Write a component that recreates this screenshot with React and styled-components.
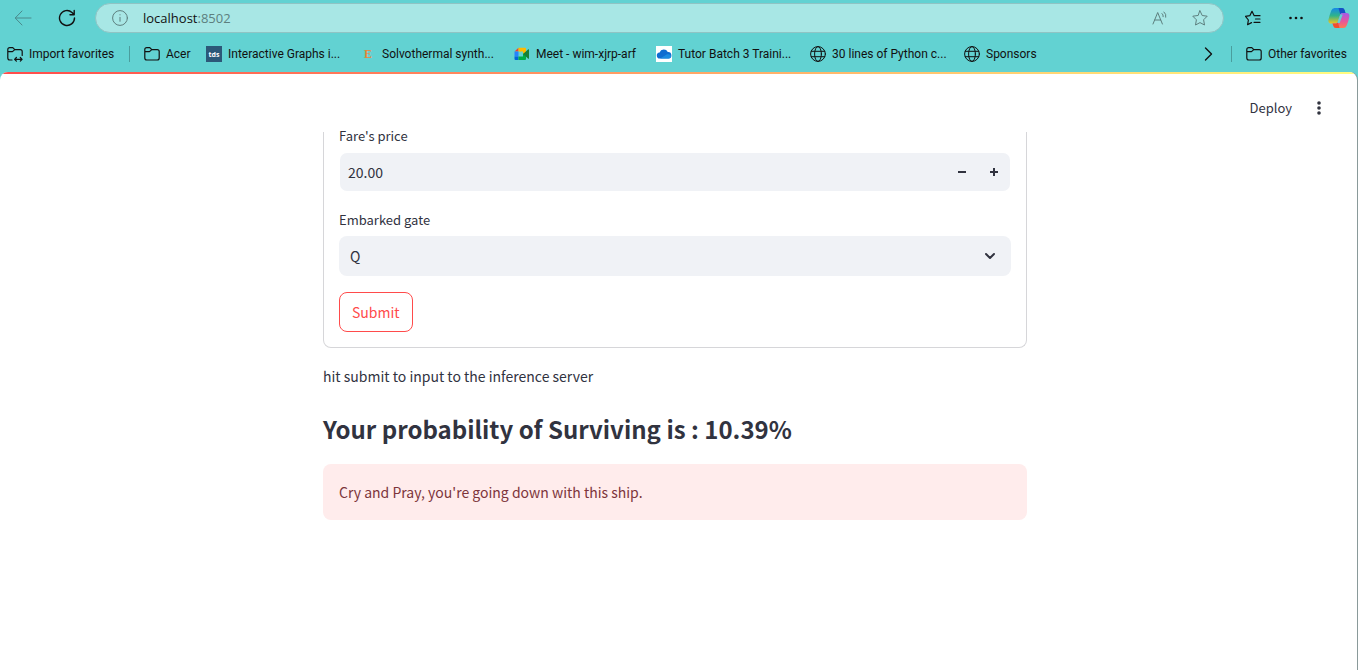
import React from "react";
import styled, { createGlobalStyle } from "styled-components";

const GlobalStyle = createGlobalStyle`
  *, *::before, *::after { box-sizing: border-box; }
  html, body { margin: 0; background: #62d2d2; }
  body { font-family: "Noto Sans CJK SC", "Noto Sans", sans-serif; color: #31333f; }
  button, input, select { font: inherit; color: inherit; margin: 0; }
`;

const Window = styled.div`
  min-height: 100vh;
  display: flex;
  flex-direction: column;
`;

const Chrome = styled.header`
  font-family: "Open Sans", "Noto Sans", sans-serif;
  color: #111;
`;

const Toolbar = styled.div`
  display: flex;
  align-items: center;
  height: 36px;
  padding: 0 8px 0 12px;
`;

const IconButton = styled.button`
  display: flex;
  align-items: center;
  justify-content: center;
  width: 22px;
  height: 24px;
  padding: 0;
  border: 0;
  background: none;
  color: ${(p) => p.$color || "#111"};
  flex: none;
`;

const NavButtons = styled.nav`
  display: flex;
  gap: 22px;
  margin-right: 17px;
`;

const AddressBar = styled.div`
  display: flex;
  align-items: center;
  flex: 1;
  height: 30px;
  padding: 0 12px 0 13px;
  border: 1px solid #8fc4c4;
  border-radius: 15px;
  background: #a8e7e5;
`;

const Address = styled.div`
  flex: 1;
  padding-left: 12px;
  font-size: 13px;
  line-height: 20px;
  span { color: #5d7f7e; }
`;

const BarActions = styled.div`
  display: flex;
  gap: 18px;
`;

const BrowserActions = styled.div`
  display: flex;
  gap: 21px;
  margin-left: 18px;
`;

const Favorites = styled.nav`
  display: flex;
  align-items: center;
  height: 36px;
  padding: 0 11px 0 7px;
`;

const Favorite = styled.a`
  display: flex;
  align-items: center;
  gap: 6px;
  margin-right: ${(p) => (p.$last ? 0 : 16)}px;
  font-family: Roboto, "Open Sans", sans-serif;
  font-size: 12px;
  line-height: 16px;
  color: inherit;
  text-decoration: none;
  white-space: nowrap;
  svg { flex: none; }
`;

const FavoriteLabel = styled.span`
  width: ${(p) => p.$width}px;
`;

const Divider = styled.span`
  width: 1px;
  height: 16px;
  margin-right: 14px;
  background: #4a9d9d;
`;

const Overflow = styled.div`
  margin-left: auto;
  margin-right: 12px;
`;

const Page = styled.div`
  flex: 1;
  display: flex;
  flex-direction: column;
  margin-right: 1px;
  overflow: hidden;
  border-radius: 8px 8px 0 0;
  background: #fff;
  box-shadow: 1px 0 0 #8a9a9a;
`;

const Decoration = styled.div`
  height: 2px;
  background: linear-gradient(90deg, #ff4b4b, #fffd80);
`;

const AppHeader = styled.div`
  display: flex;
  align-items: center;
  justify-content: flex-end;
  gap: 16px;
  height: 58px;
  padding: 10px 27px 0 0;
`;

const DeployButton = styled.button`
  padding: 0;
  border: 0;
  background: none;
  font-size: 13px;
  line-height: 22px;
`;

const Main = styled.main`
  width: 100%;
  max-width: 711px;
  margin: 0 auto;
  padding-right: 7px;
`;

const Form = styled.form`
  padding: 0 15px 15px;
  border: 1px solid #d6d6d9;
  border-top: 0;
  border-radius: 0 0 8px 8px;
`;

const Field = styled.div`
  margin-bottom: 16px;
`;

const Label = styled.label`
  display: block;
  height: ${(p) => (p.$cut ? 20 : 28)}px;
  font-size: 13px;
  line-height: ${(p) => (p.$cut ? 8 : 24)}px;
`;

const NumberBox = styled.div`
  display: flex;
  height: 40px;
  border: 1px solid transparent;
  border-radius: 8px;
  background: #f0f2f6;
  background-clip: padding-box;
`;

const NumberInput = styled.input`
  flex: 1;
  min-width: 0;
  padding: 0 8px;
  border: 0;
  background: none;
  font-size: 14px;
`;

const StepButton = styled(IconButton)`
  width: 32px;
  height: 38px;
  color: #31333f;
`;

const SelectBox = styled.div`
  display: grid;
  align-items: center;
  border-radius: 8px;
  background: #f0f2f6;
  > * { grid-area: 1 / 1; }
  svg { justify-self: end; margin-right: 13px; pointer-events: none; }
`;

const Select = styled.select`
  appearance: none;
  width: 100%;
  height: 40px;
  padding: 0 11px;
  border: 0;
  background: none;
  font-size: 14px;
`;

const SubmitButton = styled.button`
  height: 40px;
  padding: 0 12px;
  border: 1px solid #ff4b4b;
  border-radius: 8px;
  background: #fff;
  color: #ff4b4b;
  font-size: 14px;
`;

const Hint = styled.p`
  margin: 16px 0 0;
  font-size: 14px;
  line-height: 24px;
`;

const Result = styled.h3`
  margin: 22px 0 16px;
  font-size: 24px;
  font-weight: 600;
  line-height: 38px;
`;

const Alert = styled.div`
  padding: 16px;
  border-radius: 8px;
  background: #ffecec;
  color: #7d353b;
  font-size: 14px;
  line-height: 24px;
`;

const Line = ({ size = 16, box = 16, width = 1, children }) => (
  <svg width={size} height={size} viewBox={`0 0 ${box} ${box}`} fill="none" stroke="currentColor"
    strokeWidth={width} strokeLinecap="round" strokeLinejoin="round" aria-hidden="true">
    {children}
  </svg>
);

const Folder = () => (
  <Line width={1.2}>
    <path d="M.8 12V3.600Q.8 1.600 2.800 1.600h3l2 2h5.400q2 0 2 2V12q0 2-2 2H2.800q-2 0-2-2ZM.8 5.600h4.700l2.300-2" />
  </Line>
);

const ImportFolder = () => (
  <Line width={1.2}>
    <path d="M5 14H2.800q-2 0-2-2V3.600q0-2 2-2h3l2 2h5.400q2 0 2 2V9.500M.8 5.600h4.700l2.300-2M7.800 13.300h7M9.400 11.500l-1.800 1.800 1.800 1.800M13.300 11.500l1.800 1.800-1.800 1.800" />
  </Line>
);

const Globe = () => (
  <Line>
    <circle cx="8" cy="8" r="7.400" />
    <ellipse cx="8" cy="8" rx="3.400" ry="7.400" />
    <path d="M1.300 5.300h13.400M1.300 10.700h13.400" />
  </Line>
);

const Tds = () => (
  <svg width="16" height="16" viewBox="0 0 16 16" aria-hidden="true">
    <rect width="16" height="16" fill="#2c5878" />
    <text x="8" y="10.500" textAnchor="middle" fontSize="7" fontWeight="700" fill="#fff" fontFamily="Open Sans">tds</text>
  </svg>
);

const Elsevier = () => (
  <svg width="16" height="16" viewBox="0 0 16 16" aria-hidden="true">
    <text x="8" y="12" textAnchor="middle" fontSize="12" fontWeight="700" fill="#e8873a" fontFamily="Liberation Serif">E</text>
  </svg>
);

const Meet = () => (
  <svg width="16" height="16" viewBox="0 0 16 16" aria-hidden="true">
    <path d="M.5 5.500 4.500 1.800v3.700Z" fill="#ea4335" />
    <path d="M.5 5.500h4v5h-4Z" fill="#2684fc" />
    <path d="M.5 10.500h4V14h-3q-1 0-1-1Z" fill="#0066da" />
    <path d="M4.500 1.800H11q1 0 1 1v3.700L9 8V5.500H4.500Z" fill="#ffba00" />
    <path d="M4.500 10.500H9V8l3-1.500V13q0 1-1 1H4.500Z" fill="#00ac47" />
    <path d="m9 8 5.300-4.700q.7-.4.7.4v8.600q0 .8-.7.4Z" fill="#188038" />
  </svg>
);

const OneDrive = () => (
  <svg width="16" height="16" viewBox="0 0 16 16" aria-hidden="true">
    <rect width="16" height="16" fill="#fff" />
    <path d="M4 12.500a3 3 0 0 1-.4-6A4.500 4.500 0 0 1 11.800 6 3.200 3.200 0 0 1 12.500 12.500Z" fill="#0f6cd0" />
    <path d="M4 12.500 11 8.300q4-.6 4 2 0 2.200-2.300 2.200Z" fill="#1b8ae0" />
  </svg>
);

const Copilot = () => (
  <svg width="22" height="20" viewBox="0 0 22 20" aria-hidden="true">
    <defs>
      <linearGradient id="cpLeft" x1="0" y1="0" x2="0" y2="1">
        <stop offset="0" stopColor="#1489e8" />
        <stop offset=".5" stopColor="#2fb48a" />
        <stop offset="1" stopColor="#f0c51e" />
      </linearGradient>
      <linearGradient id="cpRight" x1="0" y1="0" x2="0" y2="1">
        <stop offset="0" stopColor="#a35be8" />
        <stop offset=".55" stopColor="#e8559c" />
        <stop offset="1" stopColor="#ff7a52" />
      </linearGradient>
    </defs>
    <path d="M6.500 0H14q2 0 2.600 2l.9 3h-3.200q-1.500 0-2 1.500L9.800 14q-.6 1.500-2 1.500H3.500Q-.2 15.500.5 11.500 1.500 7 3.300 2.500 4.200 0 6.500 0Z" fill="url(#cpLeft)" />
    <path d="M10.500 0H14q2 0 2.600 2l.9 3h-3.200q-1.500 0-2 1.500Z" fill="#1650c4" />
    <path d="M15.500 20H8q-2 0-2.600-2l-.9-2.500h3.300q1.400 0 2-1.500l2.400-7.500Q12.700 5 14.300 5h4.200Q22 5 21.300 9q-.8 4.500-2.600 8.500-.9 2.500-3.200 2.500Z" fill="url(#cpRight)" />
    <path d="M11.500 20H8q-2 0-2.600-2l-.9-2.500h3.300q1.400 0 2-1.500Z" fill="#f0502e" />
    <path d="M12.300 6.500h2.400l-3 8.500H9.300Z" fill="#62d2d2" />
  </svg>
);

const favorites = [
  { label: "Acer", icon: <Folder />, width: 24 },
  { label: "Interactive Graphs i...", icon: <Tds />, width: 116 },
  { label: "Solvothermal synth...", icon: <Elsevier />, width: 116 },
  { label: "Meet - wim-xjrp-arf", icon: <Meet />, width: 104 },
  { label: "Tutor Batch 3 Traini...", icon: <OneDrive />, width: 116 },
  { label: "30 lines of Python c...", icon: <Globe />, width: 116 },
  { label: "Sponsors", icon: <Globe />, width: 50 },
];

export default function App() {
  return (
    <Window>
      <GlobalStyle />
      <Chrome>
        <Toolbar>
          <NavButtons aria-label="History">
            <IconButton aria-label="Back" $color="#4a8a8c">
              <Line size={18} box={18}><path d="M17 9H1.500M8 2 1.200 9 8 16" /></Line>
            </IconButton>
            <IconButton aria-label="Reload">
              <Line size={18} box={18} width={1.4}><path d="M16.500 9A7.500 7.500 0 1 1 14 3.400L16 5.500M16.200 1.500v4.200H12" /></Line>
            </IconButton>
          </NavButtons>
          <AddressBar>
            <IconButton aria-label="Site information" $color="#5d7f7e">
              <Line><circle cx="8" cy="8" r="7.400" /><path d="M8 7.300v4M8 4.700v.2" /></Line>
            </IconButton>
            <Address>localhost<span>:8502</span></Address>
            <BarActions>
              <IconButton aria-label="Read aloud" $color="#5d7f7e">
                <Line><path d="M1 14 5.700 2.500 10.400 14M2.700 10h6M10 3.500q1.500 1.200 1.200 3.200M12 2q2.500 2 1.800 5.200" /></Line>
              </IconButton>
              <IconButton aria-label="Add to favorites" $color="#5d7f7e">
                <Line><path d="m8 .8 2.200 4.700 5 .7-3.600 3.600.9 5.200L8 12.600 3.500 15l.9-5.200L.8 6.200l5-.7Z" /></Line>
              </IconButton>
            </BarActions>
          </AddressBar>
          <BrowserActions>
            <IconButton aria-label="Favorites">
              <Line width={1.2}><path d="M6.500 12.600 2.600 14.700l.8-4.700L.5 6.300l4.300-.6L7 1.300l2.200 4.400H15M10.500 9H15M9 12.300h6" /></Line>
            </IconButton>
            <IconButton aria-label="Settings and more">
              <svg width="14" height="4" viewBox="0 0 14 4" fill="currentColor"><circle cx="1.500" cy="2" r="1.300" /><circle cx="7" cy="2" r="1.300" /><circle cx="12.500" cy="2" r="1.300" /></svg>
            </IconButton>
            <IconButton aria-label="Copilot"><Copilot /></IconButton>
          </BrowserActions>
        </Toolbar>
        <Favorites aria-label="Favorites">
          <Favorite href="#import"><ImportFolder /><FavoriteLabel $width={84}>Import favorites</FavoriteLabel></Favorite>
          <Divider />
          {favorites.map((f) => (
            <Favorite href="#" key={f.label}>{f.icon}<FavoriteLabel $width={f.width}>{f.label}</FavoriteLabel></Favorite>
          ))}
          <Overflow>
            <IconButton aria-label="More favorites">
              <Line width={1.4}><path d="m5.500 2 6 6-6 6" /></Line>
            </IconButton>
          </Overflow>
          <Divider />
          <Favorite href="#other" $last><Folder /><FavoriteLabel $width={79}>Other favorites</FavoriteLabel></Favorite>
        </Favorites>
      </Chrome>
      <Page>
        <Decoration />
        <AppHeader>
          <DeployButton>Deploy</DeployButton>
          <IconButton aria-label="Main menu" $color="#31333f">
            <svg width="4" height="14" viewBox="0 0 4 14" fill="currentColor"><circle cx="2" cy="2" r="1.800" /><circle cx="2" cy="7" r="1.800" /><circle cx="2" cy="12" r="1.800" /></svg>
          </IconButton>
        </AppHeader>
        <Main>
          <Form onSubmit={(e) => e.preventDefault()}>
            <Field>
              <Label htmlFor="fare" $cut>Fare's price</Label>
              <NumberBox>
                <NumberInput id="fare" inputMode="decimal" defaultValue="20.00" />
                <StepButton type="button" aria-label="Decrease"><Line size={8} box={8} width={2}><path d="M1 4h6" strokeLinecap="square" /></Line></StepButton>
                <StepButton type="button" aria-label="Increase"><Line size={8} box={8} width={2}><path d="M1 4h6M4 1v6" strokeLinecap="square" /></Line></StepButton>
              </NumberBox>
            </Field>
            <Field>
              <Label htmlFor="gate">Embarked gate</Label>
              <SelectBox>
                <Select id="gate" defaultValue="Q"><option>Q</option><option>S</option><option>C</option></Select>
                <Line width={2}><path d="m4 6 4 4 4-4" /></Line>
              </SelectBox>
            </Field>
            <SubmitButton type="submit">Submit</SubmitButton>
          </Form>
          <Hint>hit submit to input to the inference server</Hint>
          <Result>Your probability of Surviving is : 10.39%</Result>
          <Alert role="alert">Cry and Pray, you're going down with this ship.</Alert>
        </Main>
      </Page>
    </Window>
  );
}
